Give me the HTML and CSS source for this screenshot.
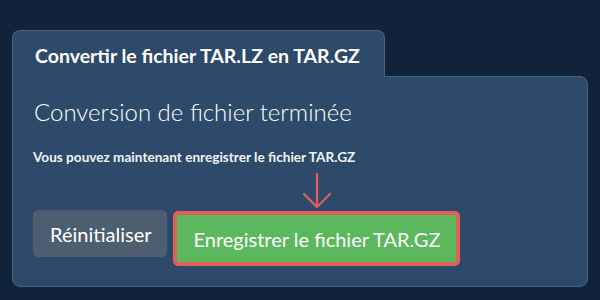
FILE: index.html
```html
<!DOCTYPE html>
<html lang="fr">
<head>
<meta charset="utf-8">
<link rel="stylesheet" href="styles.css">
</head>
<body>
<div class="wrap">
  <div class="tab">Convertir le fichier TAR.LZ en TAR.GZ</div>
  <div class="panel">
    <h2 class="heading">Conversion de fichier terminée</h2>
    <p class="msg">Vous pouvez maintenant enregistrer le fichier TAR.GZ</p>
    <div class="actions">
      <button class="btn btn-reset">Réinitialiser</button>
      <div class="save-wrap">
        <svg class="arrow" width="30" height="36" viewBox="0 0 30 36">
          <path d="M15 1 V34 M2 21 L15 34 L28 21" fill="none" stroke="#e0605c" stroke-width="2.2" stroke-linecap="round" stroke-linejoin="round"/>
        </svg>
        <button class="btn btn-save">Enregistrer le fichier TAR.GZ</button>
      </div>
    </div>
  </div>
</div>
</body>
</html>
```

FILE: styles.css
```css
html, body {
  margin: 0;
  padding: 0;
}
body {
  background: #11233a;
  width: 600px;
  height: 300px;
  overflow: hidden;
  font-family: Lato, "Noto Sans", sans-serif;
  color: #fff;
}
.wrap {
  padding: 30px 12px 0 12px;
}
.tab {
  box-sizing: border-box;
  width: 373px;
  height: 47px;
  background: #2d4a6a;
  border: 1px solid #4a6282;
  border-bottom: none;
  border-radius: 8px 8px 0 0;
  padding: 13px 0 0 22px;
  font-weight: 700;
  font-size: 19.5px;
  line-height: 24px;
  position: relative;
  z-index: 1;
  margin-bottom: -1px;
}
.panel {
  box-sizing: border-box;
  height: 211px;
  background: #2d4a6a;
  border: 1px solid #4a6282;
  border-radius: 0 8px 8px 8px;
  padding: 0 20px;
}
.heading {
  margin: 21px 0 0 1px;
  font-weight: 300;
  font-size: 24px;
  line-height: 28px;
}
.msg {
  margin: 22px 0 0 0;
  font-weight: 700;
  font-size: 13.6px;
  line-height: 18px;
  color: #f2f2f2;
}
.actions {
  display: flex;
  align-items: flex-end;
  gap: 6px;
  margin-top: 7px;
}
.save-wrap {
  display: flex;
  flex-direction: column;
  align-items: center;
}
.arrow {
  display: block;
  margin-bottom: 2px;
}
.btn {
  font-family: Lato, "Noto Sans", sans-serif;
  font-size: 20px;
  line-height: 24px;
  color: #fff;
  border: none;
  border-radius: 5px;
  cursor: pointer;
}
.btn-reset {
  background: #4d5e70;
  height: 47px;
  padding: 0 16px 0 17px;
  margin-bottom: 9px;
}
.btn-save {
  background: #5cb85c;
  height: 55px;
  padding: 0 16px;
  border: 4px solid #e0605c;
  border-radius: 5px;
}
```
